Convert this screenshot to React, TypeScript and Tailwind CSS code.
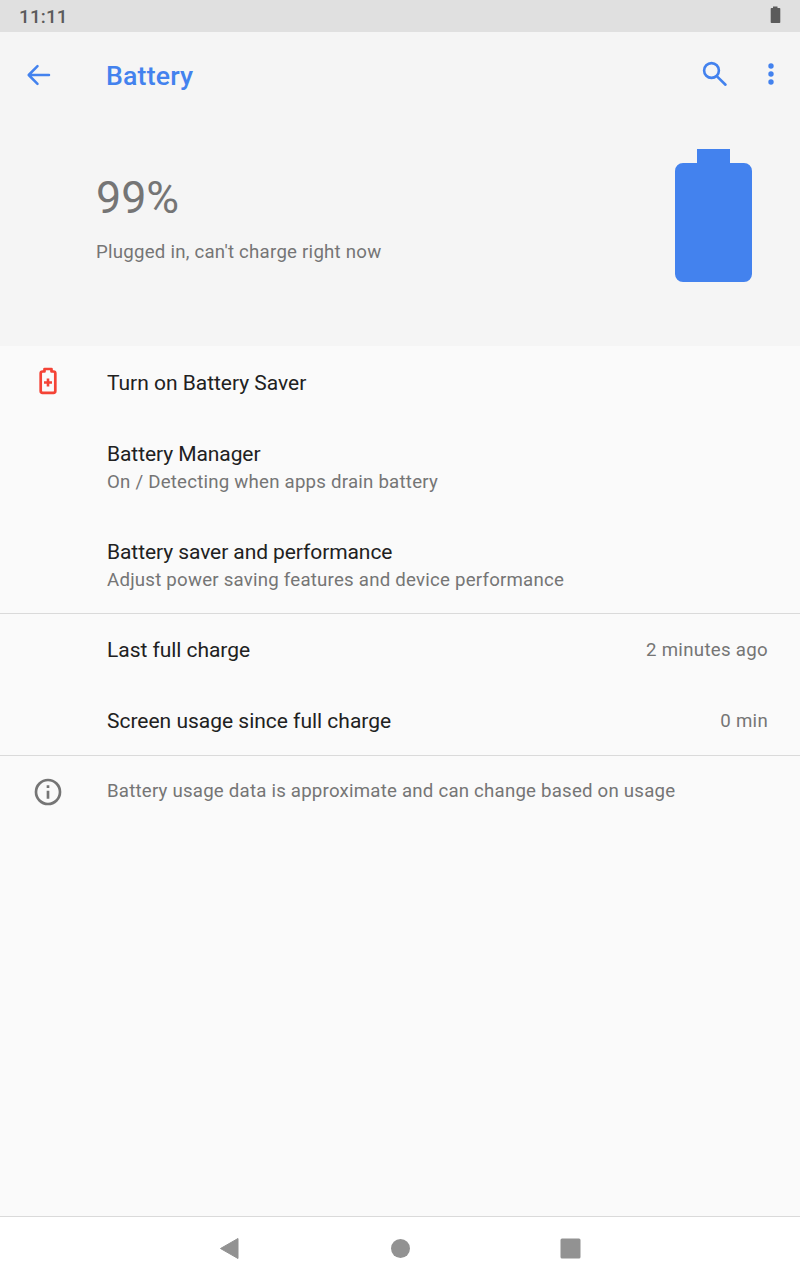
import type { ReactNode } from "react";

type RowProps = { title: string; sub?: string; value?: string; icon?: ReactNode; className: string; titleClass?: string };

function Row({ title, sub, value, icon, className, titleClass = "tracking-[-0.08px]" }: RowProps) {
  return (
    <div className={`flex items-center pr-8 ${className}`}>
      <div className="flex w-[107px] shrink-0 pl-8">{icon}</div>
      <div className="flex flex-1 flex-col">
        <div className={`text-[21px] leading-[27px] text-[#212121] ${titleClass}`}>{title}</div>
        {sub && <div className="pt-px text-[18.67px] leading-[27px] tracking-[0.22px] text-[#757575]">{sub}</div>}
      </div>
      {value && <div className="text-[18.67px] leading-[26px] tracking-[0.3px] text-[#757575]">{value}</div>}
    </div>
  );
}

function BatterySaverIcon() {
  return (
    <svg className="mb-0.5 shrink-0" width="32" height="32" viewBox="0 0 32 32" fill="none" stroke="#f44336">
      <path d="M12.500 4V6.500H10.500Q8.700 6.500 8.700 8.300V26.100Q8.700 27.900 10.500 27.900H21.500Q23.300 27.900 23.300 26.100V8.300Q23.300 6.500 21.500 6.500H19.500V4Z" strokeWidth="2.700" strokeLinejoin="round" />
      <path d="M16 13.500V21.500M12 17.500H20" strokeWidth="2.600" />
    </svg>
  );
}

export default function App() {
  return (
    <div className="flex h-[1280px] w-[800px] flex-col overflow-hidden bg-[#fafafa] font-['Roboto',sans-serif] whitespace-nowrap">
      <div className="flex h-8 items-center justify-between bg-[#e0e0e0] pr-[19px] pl-[19px] text-[19px] font-medium text-[#5b5b5b]">
        <span className="pt-0.5 tracking-[0.1px]">11:11</span>
        <svg className="mb-0.5 shrink-0" width="11" height="18" viewBox="0 0 11 18" fill="#5b5b5b"><path d="M3 0.500h4.500v1.500h2q.8 0 .8.800v13.400q0 .8-.8.800h-8q-.8 0-.8-.8V2.800q0-.8.8-.8H3z" /></svg>
      </div>
      <header className="flex h-[86px] items-center bg-[#f5f5f5] text-[#4382ee]">
        <svg className="ml-[22px] shrink-0" width="32" height="32" viewBox="0 0 32 32" fill="none" stroke="currentColor" strokeWidth="2.500" strokeLinecap="round" strokeLinejoin="round"><path d="M15.500 7.200L6.700 16l8.800 8.800M7 16h20" /></svg>
        <h1 className="ml-[52px] flex-1 pt-px text-[26.67px] font-medium tracking-[0.2px]">Battery</h1>
        <svg className="mr-6 shrink-0" width="32" height="32" viewBox="0 0 32 32" fill="none" stroke="currentColor" strokeWidth="2.600" strokeLinecap="round"><circle cx="12.500" cy="11.500" r="7.400" /><path d="M18.500 17.800L26.500 25.700" /></svg>
        <svg className="mr-[13px] shrink-0" width="32" height="32" viewBox="0 0 32 32" fill="currentColor"><circle cx="16" cy="7" r="2.700" /><circle cx="16" cy="15" r="2.700" /><circle cx="16" cy="23" r="2.700" /></svg>
      </header>
      <section className="flex h-[228px] items-start justify-between bg-[#f5f5f5] pr-12 pl-24 text-[#757575]">
        <div className="pt-[51px]">
          <div className="text-[44.8px] leading-[58px]">99%</div>
          <div className="mt-3 text-[18.67px] leading-[26px] tracking-[0.23px]">Plugged in, can't charge right now</div>
        </div>
        <svg className="mt-[31px] shrink-0" width="77" height="133" viewBox="0 0 77 133" fill="#4382ee"><path d="M22 0h33v14h14a8 8 0 0 1 8 8v103a8 8 0 0 1-8 8H8a8 8 0 0 1-8-8V22a8 8 0 0 1 8-8h14z" /></svg>
      </section>
      <main className="flex flex-1 flex-col">
        <Row className="h-[72px]" titleClass="pt-0.5 tracking-[-0.02px]" title="Turn on Battery Saver" icon={<BatterySaverIcon />} />
        <Row className="h-[98px] pt-0.5" title="Battery Manager" sub="On / Detecting when apps drain battery" />
        <Row className="h-[98px] border-b border-[#dadada] pt-[4px]" title="Battery saver and performance" sub="Adjust power saving features and device performance" />
        <Row className="h-[71px]" titleClass="pt-0.5 tracking-[-0.05px]" title="Last full charge" value="2 minutes ago" />
        <Row className="h-[71px] border-b border-[#dadada] pt-[2px]" titleClass="tracking-[-0.01px]" title="Screen usage since full charge" value="0 min" />
        <div className="flex h-[72px] items-center pl-8 text-[18.67px] tracking-[0.21px] text-[#757575]">
          <svg className="mr-[43px] shrink-0" width="32" height="32" viewBox="0 0 24 24" fill="currentColor"><path d="M11 7h2v2h-2zm0 4h2v6h-2zm1-9a10 10 0 1 0 0 20 10 10 0 0 0 0-20zm0 18a8 8 0 1 1 0-16 8 8 0 0 1 0 16z" /></svg>
          <span className="pb-0.5">Battery usage data is approximate and can change based on usage</span>
        </div>
      </main>
      <nav className="flex h-16 border-t border-[#dadada] bg-white">
        <svg width="800" height="63" viewBox="0 0 800 63" fill="#929292" stroke="#929292" strokeLinejoin="round"><path d="M220.500 31.500L238 21.500v20z" /><circle cx="400.500" cy="31.500" r="9.500" stroke="none" /><rect x="560.500" y="21.500" width="20" height="20" rx="1.500" stroke="none" /></svg>
      </nav>
    </div>
  );
}
